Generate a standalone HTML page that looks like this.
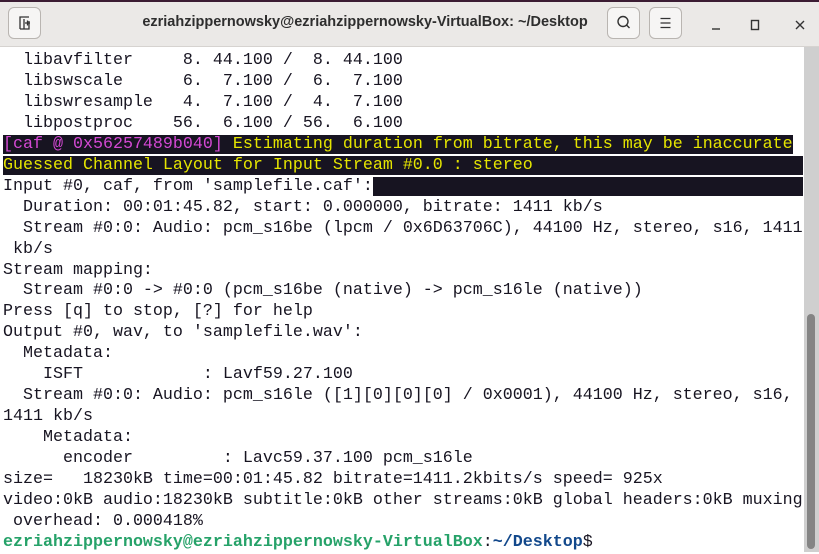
<!DOCTYPE html>
<html><head><meta charset="utf-8"><style>
html,body{margin:0;padding:0;width:819px;height:552px;overflow:hidden;background:#fff;}
.hdr{position:absolute;left:0;top:0;width:819px;height:46px;background:#ebe9e7;border-bottom:1px solid #d6d3d0;}
.corner{position:absolute;left:0;top:0;width:819px;height:2px;background:#3b1c33;}
.title{position:absolute;left:0;width:730px;top:14px;text-align:center;font:bold 14.5px "Liberation Sans",sans-serif;color:#2e2e2e;}
.btn{position:absolute;top:7px;width:33px;height:32px;border:1px solid #b9b5b1;border-radius:6px;background:#f6f5f4;box-sizing:border-box;}
.term{position:absolute;left:3px;top:51px;font-family:"Liberation Mono",monospace;font-size:16.67px;letter-spacing:0;line-height:20.95px;color:#171421;white-space:pre;}
.hl{background:#171421;}
.m{color:#d348d3}.y{color:#e5e500}
.g{color:#26a269;font-weight:bold}.b{color:#12488b;font-weight:bold}
.track{position:absolute;left:804px;top:47px;width:15px;height:505px;background:#cfcfcf;}
.thumb{position:absolute;left:807px;top:314px;width:8px;height:235px;background:#848484;border-radius:4px;}
</style></head><body>
<div class="hdr"></div>
<div class="corner"></div>
<div class="btn" style="left:8px"><svg width="31" height="30" viewBox="0 0 31 30"><path d="M11 21V9h9M15 21V11M11 21h9V13M16 15h5M18.5 12.5v5" stroke="#333" stroke-width="1.3" fill="none"/></svg></div>
<div class="title">ezriahzippernowsky@ezriahzippernowsky-VirtualBox: ~/Desktop</div>
<div class="btn" style="left:607px"><svg width="31" height="30" viewBox="0 0 31 30"><circle cx="15" cy="13.5" r="5" stroke="#333" stroke-width="1.4" fill="none"/><path d="M18.5 17l3 3" stroke="#333" stroke-width="1.4"/></svg></div>
<div class="btn" style="left:649px"><svg width="31" height="30" viewBox="0 0 31 30"><path d="M10.5 10.5h10M10.5 15h10M10.5 19.5h10" stroke="#333" stroke-width="1.3"/></svg></div>
<svg style="position:absolute;left:700px;top:12px" width="119" height="26"><path d="M12 17h8" stroke="#333" stroke-width="1.4"/><rect x="51.5" y="8.5" width="7" height="9" stroke="#333" stroke-width="1.4" fill="none"/><path d="M96 9l8 8M104 9l-8 8" stroke="#333" stroke-width="1.4"/></svg>
<div class="term">  libavfilter     8. 44.100 /  8. 44.100
  libswscale      6.  7.100 /  6.  7.100
  libswresample   4.  7.100 /  4.  7.100
  libpostproc    56.  6.100 / 56.  6.100
<span class="hl"><span class="m">[caf @ 0x56257489b040] </span><span class="y">Estimating duration from bitrate, this may be inaccurate</span></span>
<span class="hl"><span class="y">Guessed Channel Layout for Input Stream #0.0 : stereo                           </span></span>
Input #0, caf, from 'samplefile.caf':<span class="hl">                                           </span>
  Duration: 00:01:45.82, start: 0.000000, bitrate: 1411 kb/s
  Stream #0:0: Audio: pcm_s16be (lpcm / 0x6D63706C), 44100 Hz, stereo, s16, 1411
 kb/s
Stream mapping:
  Stream #0:0 -&gt; #0:0 (pcm_s16be (native) -&gt; pcm_s16le (native))
Press [q] to stop, [?] for help
Output #0, wav, to 'samplefile.wav':
  Metadata:
    ISFT            : Lavf59.27.100
  Stream #0:0: Audio: pcm_s16le ([1][0][0][0] / 0x0001), 44100 Hz, stereo, s16,
1411 kb/s
    Metadata:
      encoder         : Lavc59.37.100 pcm_s16le
size=   18230kB time=00:01:45.82 bitrate=1411.2kbits/s speed= 925x
video:0kB audio:18230kB subtitle:0kB other streams:0kB global headers:0kB muxing
 overhead: 0.000418%
<span class="g">ezriahzippernowsky@ezriahzippernowsky-VirtualBox</span>:<span class="b">~/Desktop</span>$</div>
<div class="track"></div>
<div class="thumb"></div>
</body></html>
